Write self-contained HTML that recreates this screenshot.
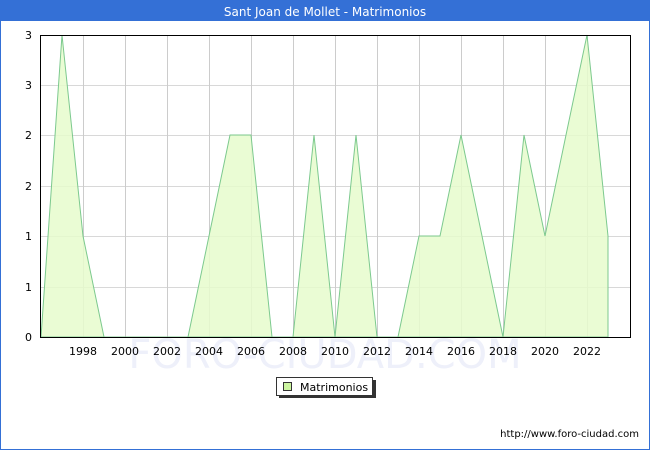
<!DOCTYPE html>
<html><head><style>
body{margin:0;width:650px;height:450px;overflow:hidden;background:#fff;font-family:"DejaVu Sans","Liberation Sans",sans-serif;}
</style></head><body>
<svg width="650" height="450" xmlns="http://www.w3.org/2000/svg" font-family="DejaVu Sans, Liberation Sans, sans-serif">
<rect x="0.5" y="0.5" width="649" height="449" fill="#fff" stroke="#3470d6"/>
<rect x="0" y="0" width="650" height="21" fill="#3470d6"/>
<text x="325" y="16" fill="#fff" font-size="12" text-anchor="middle">Sant Joan de Mollet - Matrimonios</text>
<text x="325" y="368" fill="#eef0fa" font-size="40" text-anchor="middle">FORO-CIUDAD.COM</text>
<g stroke="#d8d8d8" stroke-width="1">
<line x1="40" y1="85.5" x2="630" y2="85.5"/><line x1="40" y1="135.5" x2="630" y2="135.5"/><line x1="40" y1="186.5" x2="630" y2="186.5"/><line x1="40" y1="236.5" x2="630" y2="236.5"/><line x1="40" y1="287.5" x2="630" y2="287.5"/>
</g>
<g stroke="#cccccc">
<line x1="83.5" y1="35" x2="83.5" y2="337"/><line x1="125.5" y1="35" x2="125.5" y2="337"/><line x1="167.5" y1="35" x2="167.5" y2="337"/><line x1="209.5" y1="35" x2="209.5" y2="337"/><line x1="251.5" y1="35" x2="251.5" y2="337"/><line x1="293.5" y1="35" x2="293.5" y2="337"/><line x1="335.5" y1="35" x2="335.5" y2="337"/><line x1="377.5" y1="35" x2="377.5" y2="337"/><line x1="419.5" y1="35" x2="419.5" y2="337"/><line x1="461.5" y1="35" x2="461.5" y2="337"/><line x1="503.5" y1="35" x2="503.5" y2="337"/><line x1="545.5" y1="35" x2="545.5" y2="337"/><line x1="587.5" y1="35" x2="587.5" y2="337"/>
</g>
<polygon fill="#e6fccc" fill-opacity="0.85" stroke="#7cc98e" stroke-width="1" points="41,337 62,35 83,236 104,337 125,337 146,337 167,337 188,337 209,236 230,135 251,135 272,337 293,337 314,135 335,337 356,135 377,337 398,337 419,236 440,236 461,135 482,236 503,337 524,135 545,236 566,135 587,35 608,236 608,337"/>
<rect x="40.5" y="35.5" width="590" height="302" fill="none" stroke="#000"/>
<g font-size="11" fill="#000" text-anchor="end">
<text x="32" y="341">0</text><text x="32" y="291">1</text><text x="32" y="240">1</text><text x="32" y="190">2</text><text x="32" y="139">2</text><text x="32" y="89">3</text><text x="32" y="39">3</text>
</g>
<g font-size="11" fill="#000" text-anchor="middle">
<text x="83" y="355">1998</text><text x="125" y="355">2000</text><text x="167" y="355">2002</text><text x="209" y="355">2004</text><text x="251" y="355">2006</text><text x="293" y="355">2008</text><text x="335" y="355">2010</text><text x="377" y="355">2012</text><text x="419" y="355">2014</text><text x="461" y="355">2016</text><text x="503" y="355">2018</text><text x="545" y="355">2020</text><text x="587" y="355">2022</text>
</g>
<rect x="279" y="380" width="97" height="18" fill="#333"/>
<rect x="276.5" y="377.5" width="96" height="18" fill="#fff" stroke="#333"/>
<rect x="283.5" y="382.5" width="8" height="8" fill="#ccf5a0" stroke="#333"/>
<text x="300" y="391" font-size="11">Matrimonios</text>
<text x="639" y="437" font-size="10" text-anchor="end">http://www.foro-ciudad.com</text>
</svg>
</body></html>
